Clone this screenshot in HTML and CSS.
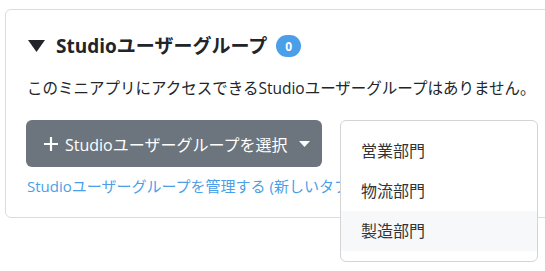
FILE: index.html
```html
<!DOCTYPE html>
<html lang="ja">
<head>
<meta charset="utf-8">
<link rel="stylesheet" href="styles.css">
</head>
<body>
<div class="card">
  <div class="heading">
    <svg class="tri" width="17" height="12" viewBox="0 0 17 12"><path d="M0 0 H17 L8.5 12 Z" fill="#212529"/></svg>
    <span class="title">Studioユーザーグループ</span>
    <span class="badge">0</span>
  </div>
  <p class="desc">このミニアプリにアクセスできるStudioユーザーグループはありません。</p>
  <div class="actions">
    <button class="btn">
      <svg class="plus" width="16" height="16" viewBox="0 0 16 16"><path d="M8 1 V15 M1 8 H15" stroke="#fff" stroke-width="2.2"/></svg>
      <span>Studioユーザーグループを選択</span>
      <svg class="caret" width="11" height="6" viewBox="0 0 11 6"><path d="M0 0 H11 L5.5 6 Z" fill="#fff"/></svg>
    </button>
    <div class="menu">
      <div class="item">営業部門</div>
      <div class="item">物流部門</div>
      <div class="item hover">製造部門</div>
    </div>
  </div>
  <a class="link" href="#">Studioユーザーグループを管理する (新しいタブで開く)</a>
</div>
</body>
</html>
```
FILE: styles.css
```css
html, body {
  margin: 0;
  padding: 0;
  background: #fff;
  overflow: hidden;
  width: 545px;
  height: 271px;
}
body {
  font-family: "Open Sans", "Noto Sans CJK JP", sans-serif;
  color: #212529;
  padding: 9px 0 0 5px;
  box-sizing: border-box;
}
.card {
  width: 600px;
  border: 1px solid #dcdcdc;
  border-radius: 6px;
  padding: 23px 0 19px 20px;
  box-sizing: border-box;
}
.heading {
  display: flex;
  align-items: center;
  height: 26px;
  margin-left: 2px;
}
.tri {
  margin-right: 11px;
}
.title {
  font-size: 19px;
  font-weight: 700;
  line-height: 26px;
}
.badge {
  margin-left: 9px;
  width: 25px;
  height: 22px;
  border-radius: 11px;
  background: #4a9fe8;
  color: #fff;
  font-size: 12px;
  font-weight: 700;
  display: flex;
  align-items: center;
  justify-content: center;
}
.desc {
  margin: 17px 0 0 1px;
  font-size: 15.5px;
  line-height: 24px;
  white-space: nowrap;
}
.actions {
  position: relative;
  margin-top: 20px;
  height: 47px;
}
.btn {
  display: flex;
  align-items: center;
  height: 47px;
  width: 296px;
  padding: 0 0 0 17px;
  border: none;
  border-radius: 6px;
  background: #6c757d;
  color: #fff;
  font-family: inherit;
  font-size: 16px;
  box-sizing: border-box;
}
.plus {
  margin-right: 6px;
}
.caret {
  margin-left: 12px;
}
.menu {
  position: absolute;
  left: 314px;
  top: 0;
  width: 198px;
  box-sizing: border-box;
  border: 1px solid #d4d4d4;
  border-radius: 6px;
  background: #fff;
  padding: 10px 0;
}
.item {
  height: 40px;
  line-height: 40px;
  padding-left: 20px;
  font-size: 16px;
  color: #333;
}
.item.hover {
  background: #f7f8fa;
}
.link {
  display: block;
  margin: 7px 0 0 1px;
  font-size: 15px;
  line-height: 24px;
  color: #4a9fe8;
  text-decoration: none;
  white-space: nowrap;
}
```
